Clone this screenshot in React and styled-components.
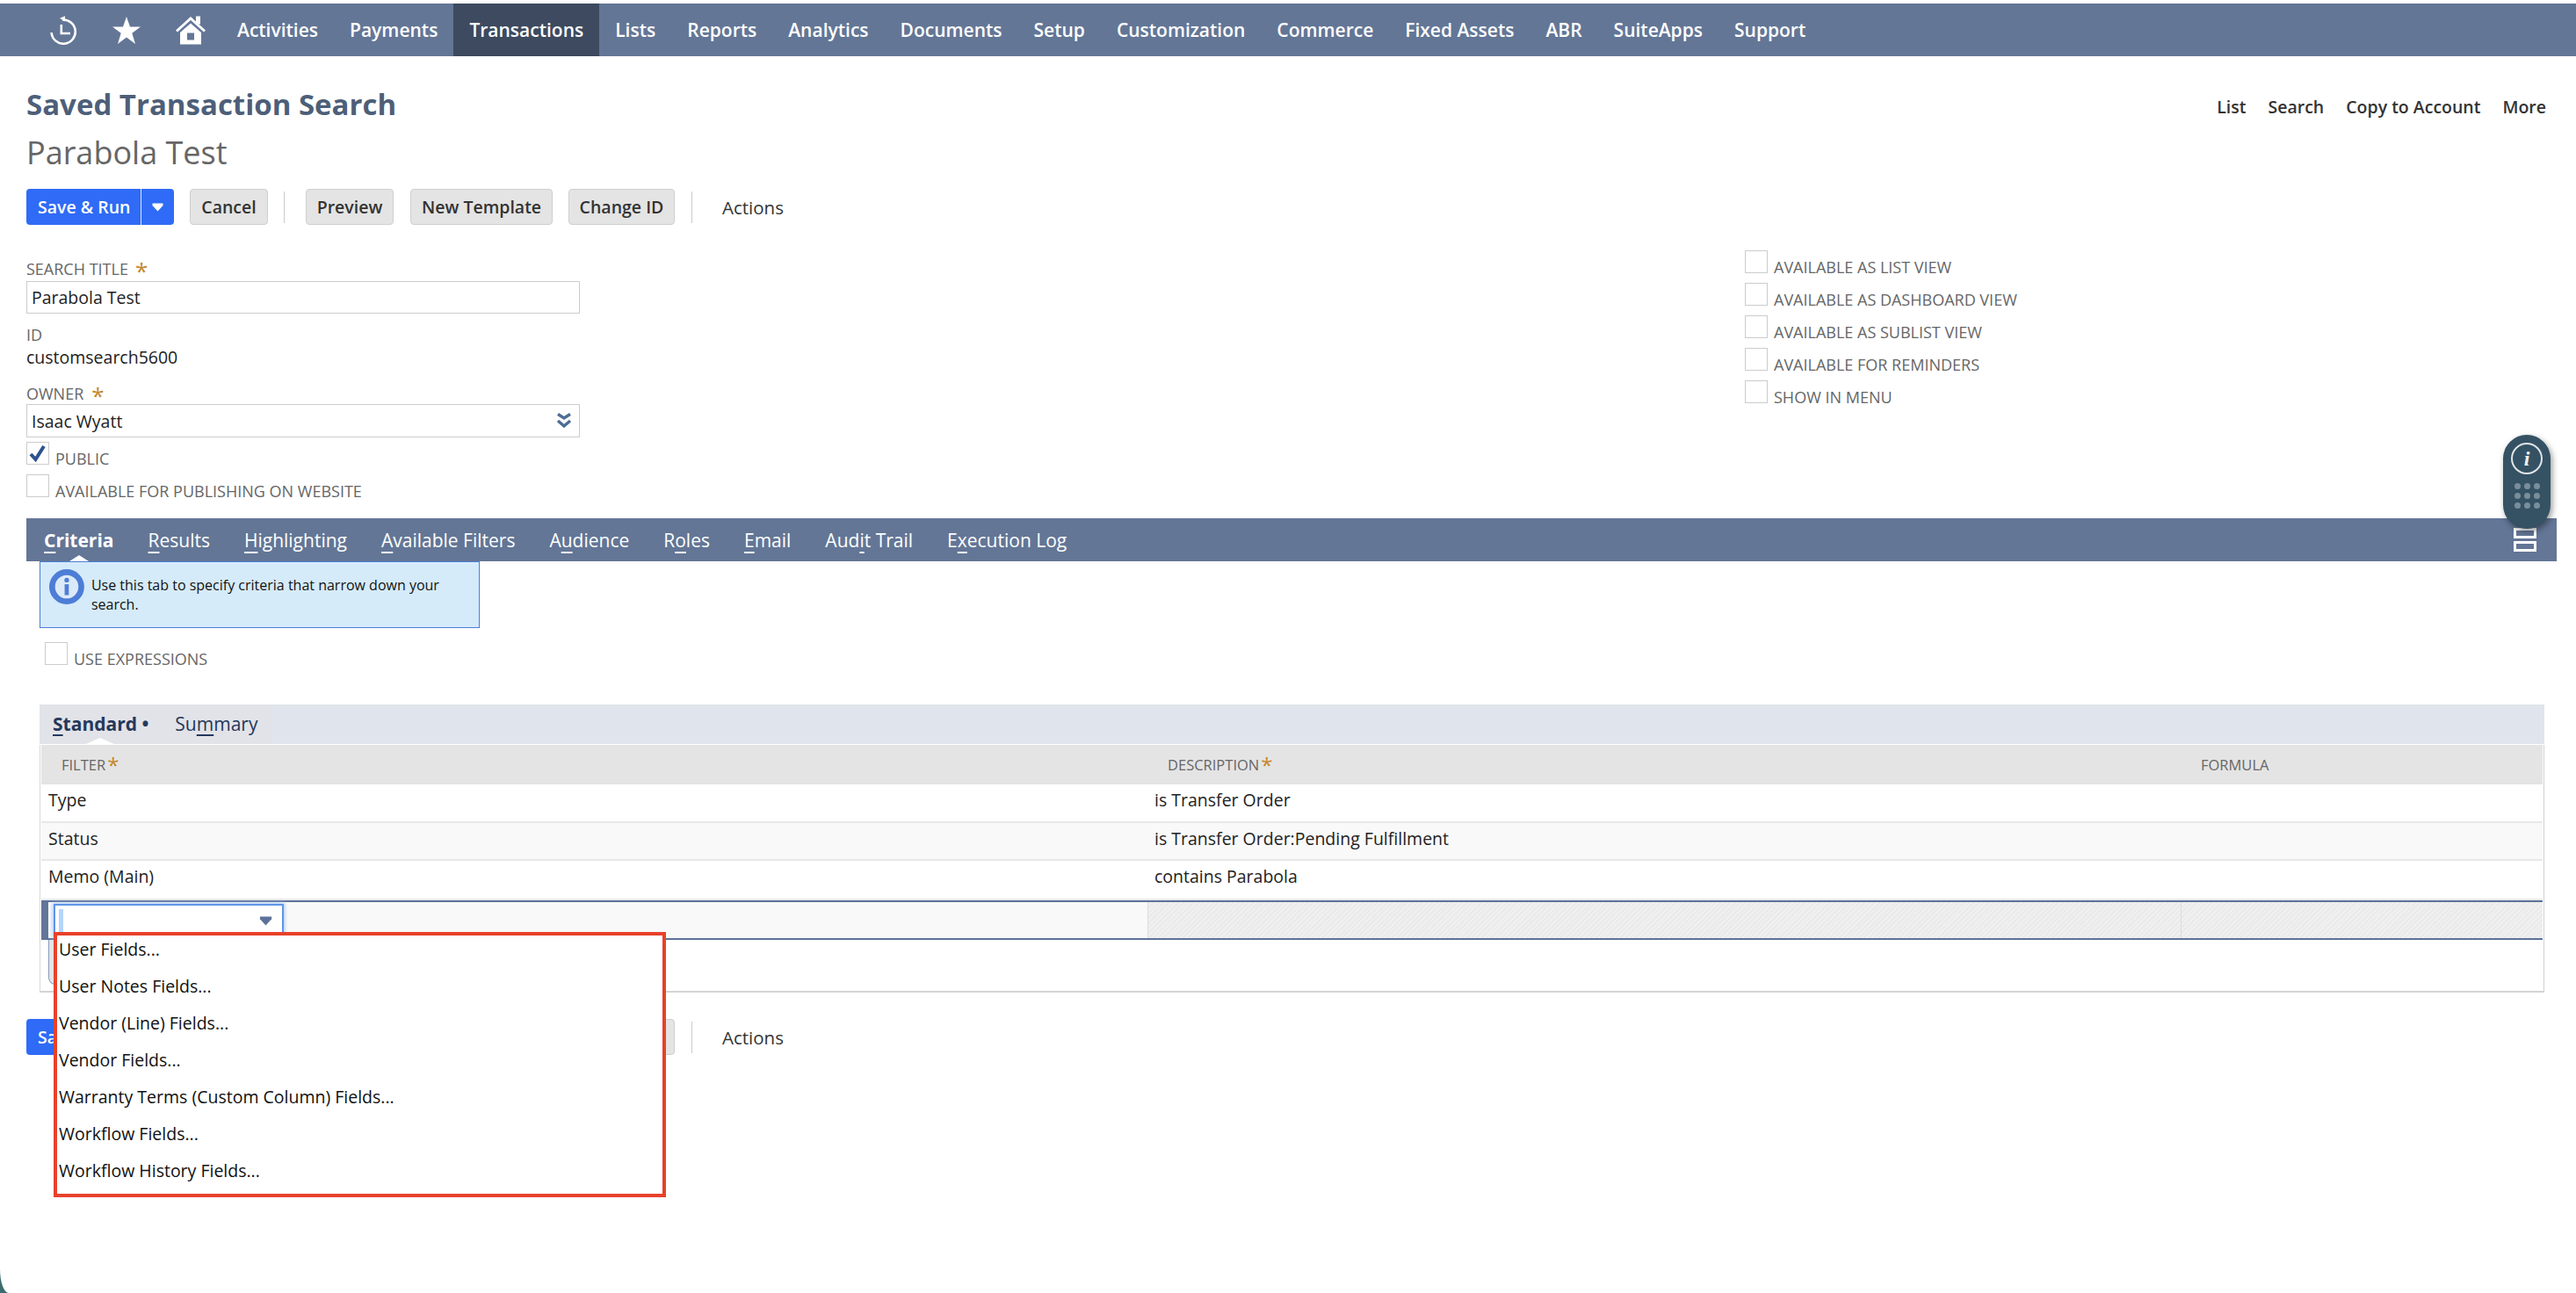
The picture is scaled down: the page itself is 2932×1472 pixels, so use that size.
import React from "react";
import styled, { createGlobalStyle } from "styled-components";

const Global = createGlobalStyle`
  html, body { margin: 0; padding: 0; background: #fff; }
  body { font-family: "Open Sans", "Liberation Sans", sans-serif; color: #222; }
  * { box-sizing: border-box; }
`;

const Page = styled.div`
  position: relative;
  width: 2932px;
  height: 1472px;
  overflow: hidden;
  background: #fff;
  padding-top: 4px;
`;
const NavBar = styled.nav`
  display: flex;
  align-items: center;
  height: 60px;
  padding-left: 57px;
  background: #637696;
`;
const NavIcons = styled.div`
  display: flex;
  align-items: center;
  gap: 40px;
  margin-right: 18px;
`;
const NavItem = styled.a`
  display: flex;
  align-items: center;
  height: 60px;
  padding: 0 18px;
  color: #fff;
  font-size: 21px;
  font-weight: 600;
  background: ${(p) => (p.$active ? "#3d4a5f" : "transparent")};
`;
const Header = styled.header`
  display: flex;
  justify-content: space-between;
  align-items: flex-start;
  padding: 0 34px 0 30px;
`;
const Title = styled.h1`
  margin: 35px 0 0;
  font-size: 33px;
  line-height: 40px;
  font-weight: 700;
  color: #4d5f79;
`;
const SubTitle = styled.div`
  margin-top: 15px;
  font-size: 36px;
  line-height: 40px;
  color: #666;
`;
const TopLinks = styled.div`
  display: flex;
  gap: 25px;
  margin-top: 43px;
  font-size: 19.5px;
  line-height: 30px;
  font-weight: 600;
  color: #333;
`;
const Toolbar = styled.div`
  display: flex;
  align-items: center;
  gap: 18px;
  height: 41px;
  margin: ${(p) => p.$margin} 0 0 30px;
`;
const SplitButton = styled.div`
  display: flex;
  height: 41px;
  border-radius: 4px;
  background: #2f6bf6;
  color: #fff;
  font-size: 19.5px;
  font-weight: 600;
`;
const SplitMain = styled.span`
  display: flex;
  align-items: center;
  width: 130px;
  padding-left: 13px;
`;
const SplitCaret = styled.span`
  display: flex;
  align-items: center;
  justify-content: center;
  width: 38px;
  border-left: 1px solid #dce6ff;
`;
const Button = styled.span`
  display: flex;
  align-items: center;
  justify-content: center;
  width: ${(p) => p.$w}px;
  height: 41px;
  margin-right: ${(p) => p.$mr || 0}px;
  border: 1px solid #cfcfcf;
  border-radius: 4px;
  background: #e4e4e4;
  color: #333;
  font-size: 19.5px;
  font-weight: 600;
  white-space: nowrap;
`;
const Sep = styled.span`
  width: 1px;
  height: 36px;
  margin-right: 6px;
  background: #ccc;
`;
const ActionsLabel = styled.span`
  margin-left: 10px;
  color: #333;
  font-size: 20.5px;
  font-weight: 500;
`;
const FormArea = styled.section`
  display: flex;
  height: 334px;
  padding-left: 30px;
`;
const LeftCol = styled.div`
  width: 630px;
  padding-top: 40px;
`;
const RightCol = styled.div`
  display: flex;
  flex-direction: column;
  gap: 11px;
  margin-left: 1326px;
  padding-top: 29px;
`;
const FieldLabel = styled.div`
  display: flex;
  align-items: center;
  height: 20px;
  margin-top: ${(p) => p.$top || 0}px;
  color: #666;
  font-size: 18px;
  line-height: 20px;
`;
const Req = styled.span`
  color: #c5862a;
  font-size: 26px;
  line-height: 20px;
  margin-left: ${(p) => p.$gap}px;
  transform: translateY(2px);
`;
const TextField = styled.div`
  display: flex;
  align-items: center;
  justify-content: space-between;
  height: ${(p) => p.$h}px;
  margin-top: ${(p) => p.$top}px;
  padding: 0 8px 0 5px;
  border: 1px solid #ccc;
  font-size: 19.5px;
  color: #222;
`;
const ReadValue = styled.div`
  margin: 2px 0 17px;
  height: 28px;
  font-size: 19.5px;
  line-height: 28px;
  color: #222;
`;
const CheckRow = styled.div`
  display: flex;
  align-items: flex-end;
  gap: 7px;
  height: 26px;
  margin: ${(p) => p.$margin || "0"};
`;
const CheckBox = styled.span`
  display: flex;
  align-items: center;
  justify-content: center;
  flex: none;
  width: 26px;
  height: 26px;
  border: 1px solid #ccc;
  background: #fff;
`;
const CheckLabel = styled.span`
  margin-bottom: -3px;
  color: #666;
  font-size: 18px;
  line-height: 20px;
  white-space: nowrap;
`;
const TabBar = styled.div`
  position: relative;
  display: flex;
  align-items: center;
  gap: 39px;
  width: 2880px;
  height: 49px;
  margin-left: 30px;
  padding: 0 23px 0 20px;
  background: #637696;
`;
const MainTab = styled.span`
  position: relative;
  top: 1px;
  color: #fff;
  font-size: 21px;
  font-weight: ${(p) => (p.$active ? 700 : 400)};
  line-height: 47px;
  white-space: nowrap;
  u { text-decoration-thickness: 2px; text-underline-offset: 5px; }
`;
const Notch = styled.span`
  position: absolute;
  left: 50%;
  bottom: 0;
  width: 0;
  height: 0;
  margin-left: -11px;
  border-left: 11px solid transparent;
  border-right: 11px solid transparent;
  border-bottom: 7px solid #fff;
`;
const StackIcon = styled.span`
  display: flex;
  flex-direction: column;
  gap: 3px;
  margin-left: auto;
`;
const StackBar = styled.span`
  display: block;
  width: 26px;
  height: 12px;
  border: 2px solid #fff;
  box-shadow: inset 0 0 0 1px #fff;
  background: #637696;
`;
const TabPanel = styled.section`
  padding-left: 45px;
`;
const HelpBox = styled.div`
  display: flex;
  gap: 8px;
  width: 501px;
  height: 76px;
  padding: 7px 10px;
  border: 1px solid #4d7dd6;
  background: #d5ebfa;
`;
const HelpText = styled.div`
  padding-top: 8px;
  font-size: 16px;
  line-height: 22px;
  color: #111;
`;
const ExprRow = styled(CheckRow)`
  margin: 16px 0 45px 6px;
`;
const SubTabBar = styled.div`
  display: flex;
  width: 2851px;
  height: 45px;
  background: #e0e4ec;
`;
const SubTabs = styled.div`
  display: flex;
  align-items: center;
  width: 264px;
  padding-left: 15px;
  background: #e2e3e8;
  color: #24385b;
  font-size: 21px;
`;
const SubTab = styled.span`
  position: relative;
  font-weight: ${(p) => (p.$active ? 700 : 400)};
  line-height: 45px;
  margin-right: ${(p) => (p.$active ? 30 : 0)}px;
  u { text-decoration-thickness: 2px; text-underline-offset: 4px; }
`;
const SubNotch = styled(Notch)`
  left: 54px;
  margin-left: -16px;
  border-left-width: 16px;
  border-right-width: 16px;
`;
const Sheet = styled.div`
  width: 2851px;
  height: 282px;
  margin-top: 1px;
  padding: 0 1px 0 1px;
  border-right: 1px solid #d0d0d0;
  border-left: 1px solid #d8d8d8;
  border-bottom: 2px solid #d4d4d4;
`;
const Cols = styled.div`
  display: grid;
  grid-template-columns: 1259px 1176px 1fr;
`;
const HeadRow = styled(Cols)`
  height: 45px;
  background: #e4e4e4;
`;
const HeadCell = styled.div`
  display: flex;
  align-items: center;
  padding-left: 23px;
  color: #666;
  font-size: 16.5px;
  line-height: 20px;
`;
const HeadStar = styled.span`
  color: #c5862a;
  font-size: 24px;
  line-height: 20px;
  margin-left: 2px;
`;
const Row = styled(Cols)`
  height: ${(p) => p.$h}px;
  border-bottom: 2px solid #e8e8e8;
  background: ${(p) => (p.$alt ? "#f9f9f9" : "#fff")};
`;
const Cell = styled.div`
  padding: 6px 0 0 8px;
  font-size: 19.5px;
  line-height: 24px;
  color: #222;
`;
const EditRow = styled(Cols)`
  height: 45px;
  border-top: 2px solid #5d7299;
  border-bottom: 2px solid #5d7299;
`;
const EditFirst = styled.div`
  display: flex;
  background: #f9f9f9;
`;
const EditStrip = styled.span`
  width: 8px;
  background: #62769a;
`;
const Combo = styled.div`
  display: flex;
  align-items: center;
  justify-content: space-between;
  width: 262px;
  height: 38px;
  margin: 2px 0 0 6px;
  padding: 0 10px 0 4px;
  border: 2px solid #5f95e6;
  box-shadow: 0 0 4px 1px #a8c8f5;
  background: #fff;
`;
const SelectionMark = styled.span`
  width: 5px;
  height: 27px;
  background: #b5d5fb;
`;
const Hatched = styled.div`
  border-left: 1px solid #dcdcdc;
  background: repeating-linear-gradient(-45deg, #f0f0f0 0 2px, #eaeaea 2px 4px);
`;
const ButtonStub = styled.div`
  width: 200px;
  height: 51px;
  margin-left: 8px;
  border: 1px solid #8a9cbe;
  border-top: 0;
  border-radius: 0 0 0 8px;
  background: #e4e4e4;
`;
const Popup = styled.div`
  position: absolute;
  left: 61px;
  top: 1061px;
  display: flex;
  flex-direction: column;
  gap: 10px;
  width: 697px;
  height: 302px;
  padding-left: 2px;
  border: 4px solid #e8412a;
  background: #fff;
`;
const PopupItem = styled.div`
  height: 32px;
  font-size: 19.5px;
  line-height: 32px;
  color: #111;
`;
const Widget = styled.div`
  position: absolute;
  left: 2849px;
  top: 495px;
  display: flex;
  flex-direction: column;
  align-items: center;
  width: 54px;
  height: 107px;
  padding-top: 9px;
  border-radius: 27px;
  background: #355264;
  box-shadow: 2px 3px 7px rgba(0, 0, 0, 0.4);
`;
const WidgetInfo = styled.div`
  display: flex;
  align-items: center;
  justify-content: center;
  width: 36px;
  height: 36px;
  border: 2px solid #dfe4e6;
  border-radius: 50%;
  color: #eef1f2;
  font-family: "Liberation Serif", serif;
  font-style: italic;
  font-weight: 700;
  font-size: 24px;
`;
const WidgetDots = styled.div`
  display: grid;
  grid-template-columns: repeat(3, 7px);
  gap: 4px;
  margin-top: 10px;
`;
const Dot = styled.span`
  width: 7px;
  height: 7px;
  border-radius: 50%;
  background: #7a8e9a;
`;
const WindowCorner = styled.div`
  position: absolute;
  left: 0;
  bottom: 0;
  width: 10px;
  height: 27px;
  background: #3c6c6e;
  &::before {
    content: "";
    display: block;
    width: 100%;
    height: 100%;
    background: #fff;
    border-bottom-left-radius: 10px 27px;
  }
`;

const HistoryIcon = () => (
  <svg width="31" height="33" viewBox="0 0 31 33">
    <path d="M14 4.6 A13.6 13.6 0 1 1 1.6 19" fill="none" stroke="#fff" strokeWidth="2.6" />
    <path d="M11 2.8 L17 0.2 V6.4 Z" fill="#fff" />
    <path d="M12.8 10 V20 H23" fill="none" stroke="#fff" strokeWidth="2.6" />
  </svg>
);
const StarIcon = () => (
  <svg width="32" height="31" viewBox="0 0 32 31">
    <path d="M16 0 L20 11.5 H32 L22.3 18.8 L26 31 L16 23.6 L6 31 L9.7 18.8 L0 11.5 H12 Z" fill="#fff" />
  </svg>
);
const HomeIcon = () => (
  <svg width="34" height="33" viewBox="0 0 34 33">
    <path d="M1 17.5 L17 3 L33 17.5" fill="none" stroke="#fff" strokeWidth="3" />
    <rect x="23" y="0.5" width="5" height="9" fill="#fff" />
    <path fillRule="evenodd" d="M17 8.5 L29 19 V32.5 H5 V19 Z M13 19.5 V27.5 H21 V19.5 Z" fill="#fff" />
  </svg>
);
const Caret = ({ w = 13, h = 10, c = "#fff" }) => (
  <svg width={w} height={h} viewBox="0 0 13 10">
    <path d="M0.5 0.5 H12.5 V3 L6.5 9.5 L0.5 3 Z" fill={c} />
  </svg>
);
const DoubleChevron = () => (
  <svg width="18" height="18" viewBox="0 0 18 18">
    <path d="M2 1.5 L9 6 L16 1.5 M2 9 L9 15 L16 9" fill="none" stroke="#4f6d95" strokeWidth="3.4" />
  </svg>
);
const Check = () => (
  <svg width="22" height="22" viewBox="0 0 22 22">
    <path d="M3 12 L8.5 18 L18 3" fill="none" stroke="#2d5290" strokeWidth="4" />
  </svg>
);
const HelpIcon = () => (
  <svg width="42" height="42" viewBox="0 0 42 42">
    <circle cx="21" cy="21" r="17.5" fill="#dbeaf8" stroke="#4d7dd6" strokeWidth="7" />
    <circle cx="21" cy="13" r="2.8" fill="#4d7dd6" />
    <rect x="18.5" y="18" width="5" height="13" fill="#4d7dd6" />
  </svg>
);

const navItems = ["Activities", "Payments", "Transactions", "Lists", "Reports", "Analytics", "Documents", "Setup", "Customization", "Commerce", "Fixed Assets", "ABR", "SuiteApps", "Support"];
const tabs = [
  ["", "C", "riteria"],
  ["", "R", "esults"],
  ["", "H", "ighlighting"],
  ["", "A", "vailable Filters"],
  ["A", "u", "dience"],
  ["R", "o", "les"],
  ["", "E", "mail"],
  ["Aud", "i", "t Trail"],
  ["E", "x", "ecution Log"],
];
const rows = [
  ["Type", "is Transfer Order", 44, false],
  ["Status", "is Transfer Order:Pending Fulfillment", 43, true],
  ["Memo (Main)", "contains Parabola", 45, false],
];
const menuItems = ["User Fields...", "User Notes Fields...", "Vendor (Line) Fields...", "Vendor Fields...", "Warranty Terms (Custom Column) Fields...", "Workflow Fields...", "Workflow History Fields..."];
const rightChecks = ["AVAILABLE AS LIST VIEW", "AVAILABLE AS DASHBOARD VIEW", "AVAILABLE AS SUBLIST VIEW", "AVAILABLE FOR REMINDERS", "SHOW IN MENU"];

const Actions = ({ margin }) => (
  <Toolbar $margin={margin}>
    <SplitButton>
      <SplitMain>Save &amp; Run</SplitMain>
      <SplitCaret><Caret /></SplitCaret>
    </SplitButton>
    <Button $w={89}>Cancel</Button>
    <Sep />
    <Button $w={100} $mr={1}>Preview</Button>
    <Button $w={162}>New Template</Button>
    <Button $w={121} $mr={1}>Change ID</Button>
    <Sep />
    <ActionsLabel>Actions</ActionsLabel>
  </Toolbar>
);

export default function App() {
  return (
    <Page>
      <Global />
      <NavBar>
        <NavIcons>
          <HistoryIcon />
          <StarIcon />
          <HomeIcon />
        </NavIcons>
        {navItems.map((n) => (
          <NavItem key={n} $active={n === "Transactions"}>{n}</NavItem>
        ))}
      </NavBar>
      <Header>
        <div>
          <Title>Saved Transaction Search</Title>
          <SubTitle>Parabola Test</SubTitle>
        </div>
        <TopLinks>
          <span>List</span>
          <span>Search</span>
          <span>Copy to Account</span>
          <span>More</span>
        </TopLinks>
      </Header>
      <Actions margin="21px" />
      <FormArea>
        <LeftCol>
          <FieldLabel>SEARCH TITLE<Req $gap={8}>*</Req></FieldLabel>
          <TextField $h={37} $top={4}>Parabola Test</TextField>
          <FieldLabel $top={14}>ID</FieldLabel>
          <ReadValue>customsearch5600</ReadValue>
          <FieldLabel>OWNER<Req $gap={9}>*</Req></FieldLabel>
          <TextField $h={38} $top={2}>Isaac Wyatt<DoubleChevron /></TextField>
          <CheckRow $margin="5px 0 0">
            <CheckBox><Check /></CheckBox>
            <CheckLabel>PUBLIC</CheckLabel>
          </CheckRow>
          <CheckRow $margin="11px 0 0">
            <CheckBox />
            <CheckLabel>AVAILABLE FOR PUBLISHING ON WEBSITE</CheckLabel>
          </CheckRow>
        </LeftCol>
        <RightCol>
          {rightChecks.map((c) => (
            <CheckRow key={c}>
              <CheckBox />
              <CheckLabel>{c}</CheckLabel>
            </CheckRow>
          ))}
        </RightCol>
      </FormArea>
      <TabBar>
        {tabs.map(([a, k, b], i) => (
          <MainTab key={k + b} $active={i === 0}>
            {a}<u>{k}</u>{b}
            {i === 0 && <Notch />}
          </MainTab>
        ))}
        <StackIcon>
          <StackBar />
          <StackBar />
        </StackIcon>
      </TabBar>
      <TabPanel>
        <HelpBox>
          <HelpIcon />
          <HelpText>Use this tab to specify criteria that narrow down your search.</HelpText>
        </HelpBox>
        <ExprRow>
          <CheckBox />
          <CheckLabel>USE EXPRESSIONS</CheckLabel>
        </ExprRow>
        <SubTabBar>
          <SubTabs>
            <SubTab $active><u>S</u>tandard •<SubNotch /></SubTab>
            <SubTab>Su<u>m</u>mary</SubTab>
          </SubTabs>
        </SubTabBar>
        <Sheet>
          <HeadRow>
            <HeadCell>FILTER<HeadStar>*</HeadStar></HeadCell>
            <HeadCell>DESCRIPTION<HeadStar>*</HeadStar></HeadCell>
            <HeadCell>FORMULA</HeadCell>
          </HeadRow>
          {rows.map(([f, d, h, alt]) => (
            <Row key={f} $h={h} $alt={alt}>
              <Cell>{f}</Cell>
              <Cell>{d}</Cell>
              <Cell />
            </Row>
          ))}
          <EditRow>
            <EditFirst>
              <EditStrip />
              <Combo>
                <SelectionMark />
                <Caret w={17} h={11} c="#5d7299" />
              </Combo>
            </EditFirst>
            <Hatched />
            <Hatched />
          </EditRow>
          <ButtonStub />
        </Sheet>
      </TabPanel>
      <Actions margin="30px" />
      <Popup>
        {menuItems.map((m) => (
          <PopupItem key={m}>{m}</PopupItem>
        ))}
      </Popup>
      <Widget>
        <WidgetInfo>i</WidgetInfo>
        <WidgetDots>
          {Array.from({ length: 9 }, (_, i) => <Dot key={i} />)}
        </WidgetDots>
      </Widget>
      <WindowCorner />
    </Page>
  );
}
